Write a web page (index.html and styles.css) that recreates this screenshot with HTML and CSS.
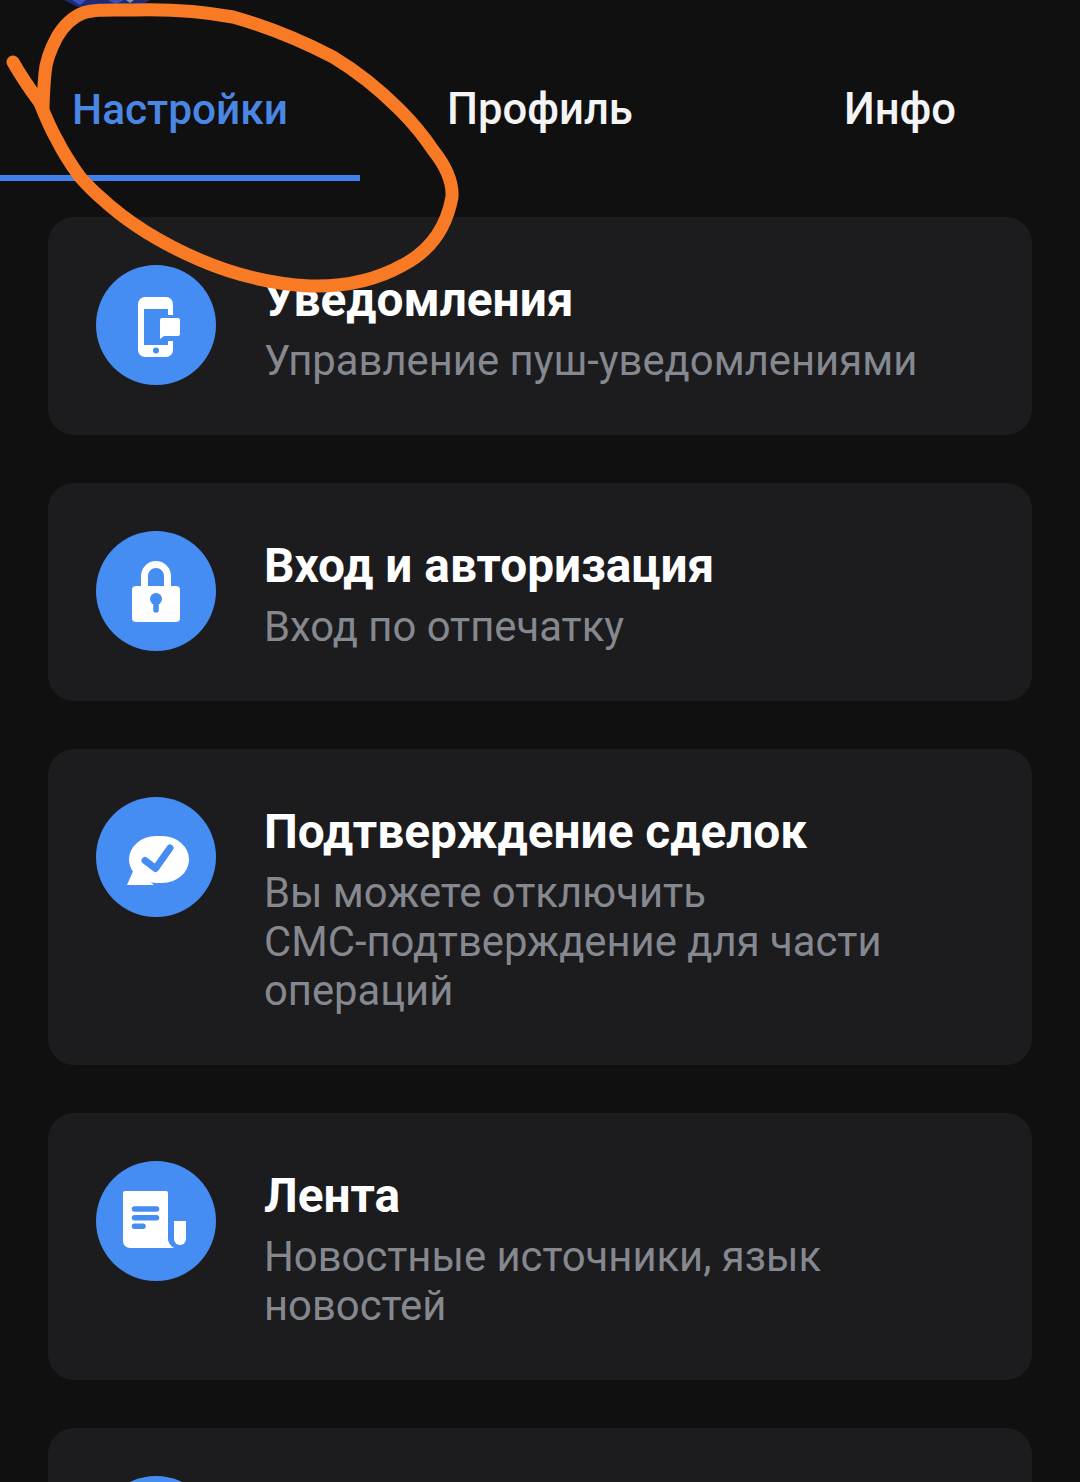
FILE: index.html
```html
<!DOCTYPE html>
<html lang="ru">

<head>
    <meta charset="UTF-8">
    <meta name="viewport" content="width=device-width, initial-scale=1.0">
    <title>Настройки</title>
    <link rel="stylesheet" href="styles.css">
</head>

<body>
    <div class="page">
        <div class="tabs">
            <div class="tab tab-active">Настройки</div>
            <div class="tab">Профиль</div>
            <div class="tab">Инфо</div>
        </div>

        <div class="list">
            <div class="card">
                <div class="icon">
                    <svg viewBox="0 0 120 120">
                        <rect class="fill-white" x="42" y="32" width="35" height="60" rx="7" />
                        <rect class="fill-blue" x="48" y="44" width="24" height="36" />
                        <rect class="fill-blue" x="70" y="50" width="9" height="26" />
                        <path class="fill-white" d="M66 53h16a2 2 0 0 1 2 2v14a2 2 0 0 1-2 2H68l-4 3V55a2 2 0 0 1 2-2z" />
                        <circle class="fill-blue" cx="60" cy="85.500" r="3" />
                    </svg>
                </div>
                <div class="text">
                    <div class="title">Уведомления</div>
                    <div class="sub">Управление пуш-уведомлениями</div>
                </div>
            </div>

            <div class="card">
                <div class="icon">
                    <svg viewBox="0 0 120 120">
                        <path class="line-white" d="M48.500 58V45a11.500 11.500 0 0 1 23 0v13" />
                        <rect class="fill-white" x="36" y="55" width="48" height="36" rx="4" />
                        <circle class="fill-blue" cx="60" cy="68" r="6" />
                        <path class="line-blue" d="M60 70v9" />
                    </svg>
                </div>
                <div class="text">
                    <div class="title">Вход и авторизация</div>
                    <div class="sub">Вход по отпечатку</div>
                </div>
            </div>

            <div class="card">
                <div class="icon">
                    <svg viewBox="0 0 120 120">
                        <rect class="fill-white" x="33" y="39" width="60" height="47" rx="27" ry="23.500" />
                        <path class="fill-white" d="M38 72L31 88H58z" />
                        <path class="line-blue check" d="M49 63.500l10.500 8L74 51" />
                    </svg>
                </div>
                <div class="text">
                    <div class="title">Подтверждение сделок</div>
                    <div class="sub">Вы можете отключить<br>СМС-подтверждение для части<br>операций</div>
                </div>
            </div>

            <div class="card">
                <div class="icon">
                    <svg viewBox="0 0 120 120">
                        <path class="fill-white" d="M29 30H70a2 2 0 0 1 2 2V78q0 5 6 9H34a7 7 0 0 1-7-7V32a2 2 0 0 1 2-2z" />
                        <path class="fill-white" d="M78 60H90V78a6 6 0 0 1-12 0z" />
                        <path class="line-blue" d="M38.500 48H60.500M38.500 56.700H60.500M38.500 65.300H47" />
                    </svg>
                </div>
                <div class="text">
                    <div class="title">Лента</div>
                    <div class="sub">Новостные источники, язык<br>новостей</div>
                </div>
            </div>

            <div class="card">
                <div class="icon"></div>
            </div>
        </div>

        <!-- картинка сверху, обрезанная краем экрана -->
        <svg class="top-art" viewBox="0 0 90 10">
            <path d="M0 0H86L78 5 60 8 42 6 28 9 14 7 6 3z" fill="#1c2a78" />
            <path d="M8 0H22L16 5zM44 0H60L52 4z" fill="#3b4fb8" />
            <path d="M62 0H70L66 3z" fill="#8a8fb0" />
        </svg>

        <!-- пометка от руки поверх скриншота -->
        <svg class="scribble" viewBox="0 0 1080 1482">
            <path d="M13 62C22 78 32 92 40 103C46 118 50 128 57 140C64 154 72 166 80 177C88 186 93 191 100 197C130 225 165 245 200 260C235 275 270 284 310 286C345 287 378 279 403 265C428 252 446 230 452 197C453 180 445 165 433 150C423 135 412 122 400 110C380 90 358 72 333 57C300 40 265 26 233 17C200 11 165 9 133 10C110 10 95 9 83 13C70 18 63 27 57 37C50 50 46 60 45 73C44 85 43 98 43 110" />
        </svg>
    </div>
</body>

</html>
```

FILE: styles.css
```css
html,
body {
    margin: 0;
    height: 1482px;
    overflow: hidden;
    background: #101011;
}

body {
    font-family: Roboto, "Liberation Sans", sans-serif;
    color: white;
}

.page {
    position: relative;
    width: 1080px;
    height: 1482px;
    overflow: hidden;
}

.tabs {
    display: flex;
    height: 181px;
}

.tab {
    flex: 1;
    box-sizing: border-box;
    padding-top: 82px;
    font-size: 43.600px;
    line-height: 56px;
    font-weight: 500;
    text-align: center;
    color: #f4f4f5;
}

.tab-active {
    font-size: 42.400px;
    color: #4a87e4;
    border-bottom: 6px solid #3f80ea;
}

.list {
    display: flex;
    flex-direction: column;
    gap: 48.500px;
    padding: 36px 48px 0;
}

.card {
    display: flex;
    gap: 48px;
    flex-shrink: 0;
    padding: 48px;
    background: #1c1c1f;
    border-radius: 26px;
}

.icon {
    width: 120px;
    height: 120px;
    flex-shrink: 0;
    border-radius: 50%;
    background: #458df2;
}

.icon svg {
    display: block;
    width: 120px;
    height: 120px;
}

.fill-white {
    fill: white;
}

.fill-blue {
    fill: #458df2;
}

.line-white,
.line-blue {
    fill: none;
    stroke-linecap: round;
    stroke-linejoin: round;
}

.line-white {
    stroke: white;
    stroke-width: 7;
}

.line-blue {
    stroke: #458df2;
    stroke-width: 5.500;
}

.check {
    stroke-width: 7;
}

.text {
    padding: 5px 0 2px;
}

.title {
    font-size: 47.800px;
    line-height: 60px;
    font-weight: 700;
    color: white;
}

.sub {
    margin-top: 5.500px;
    font-size: 41.800px;
    line-height: 49px;
    color: #85888e;
}

.top-art {
    position: absolute;
    left: 64px;
    top: 0;
    width: 90px;
    height: 10px;
}

.scribble {
    position: absolute;
    left: 0;
    top: 0;
    width: 1080px;
    height: 1482px;
    fill: none;
    stroke: #f97a25;
    stroke-width: 13;
    stroke-linecap: round;
    stroke-linejoin: round;
}
```
